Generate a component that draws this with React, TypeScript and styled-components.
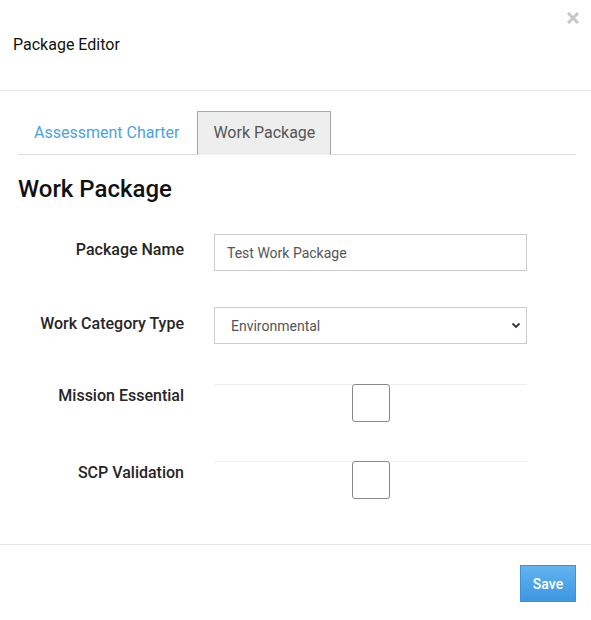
import styled, { createGlobalStyle } from 'styled-components';

const GlobalStyle = createGlobalStyle`
  html, body {
    margin: 0;
    padding: 0;
    background: #FFFFFF;
    font-family: Roboto, "Liberation Sans", Arial, sans-serif;
  }
`

const Modal = styled.div`
  width: 591px;
  height: 620px;
  background: #FFFFFF;
  position: relative;
  display: flex;
  flex-direction: column;
`

const ModalHeader = styled.div`
  height: 91px;
  border-bottom: 1px solid #e5e5e5;
  display: flex;
  align-items: center;
  padding: 0 13px;
  box-sizing: border-box;
`

const Title = styled.h4`
  margin: 0;
  font-size: 16px;
  font-weight: 400;
  color: #111;
  padding-bottom: 2px;
`

const CloseButton = styled.button`
  position: absolute;
  top: 9px;
  right: 9px;
  width: 18px;
  height: 18px;
  padding: 0;
  border: none;
  background: none;
  display: flex;
  align-items: center;
  justify-content: center;
  cursor: pointer;
`

const ModalBody = styled.div`
  padding: 20px 15px 0 18px;
  flex: 1;
`

const TabBar = styled.ul`
  display: flex;
  list-style: none;
  margin: 0;
  padding: 0;
  border-bottom: 1px solid #ddd;
`

const Tab = styled.li<{ $active?: boolean }>`
  height: 44px;
  box-sizing: border-box;
  display: flex;
  align-items: center;
  padding: 0 15px 2px;
  margin: ${({ $active }) => ($active ? '0 0 -1px 0' : '0 2px -1px 0')};
  font-size: 16px;
  color: ${({ $active }) => ($active ? '#555' : '#4aa3df')};
  background: ${({ $active }) => ($active ? '#eeeeee' : 'transparent')};
  border: 1px solid ${({ $active }) => ($active ? '#a9a9a9' : 'transparent')};
  border-bottom-color: ${({ $active }) => ($active ? '#eeeeee' : 'transparent')};
  cursor: pointer;
`

const SectionTitle = styled.h3`
  margin: 21px 0 32px;
  font-size: 24px;
  font-weight: 500;
  color: #111;
  line-height: 26px;
`

const FormRow = styled.div<{ $space: number }>`
  display: grid;
  grid-template-columns: 166px 313px;
  column-gap: 30px;
  margin-bottom: ${({ $space }) => $space}px;
`

const Label = styled.label<{ $top: number }>`
  text-align: right;
  font-size: 16px;
  font-weight: 500;
  color: #262626;
  padding-top: ${({ $top }) => $top}px;
  line-height: 18px;
`

const TextInput = styled.input`
  height: 37px;
  box-sizing: border-box;
  border: 1px solid #ccc;
  padding: 0 12px;
  font-family: inherit;
  font-size: 14px;
  color: #555;
  outline: none;
`

const SelectWrap = styled.div`
  position: relative;
  height: 37px;
`

const Select = styled.select`
  width: 100%;
  height: 37px;
  box-sizing: border-box;
  border: 1px solid #ccc;
  background: #fff;
  padding: 0 12px 0 16px;
  font-family: inherit;
  font-size: 14px;
  color: #555;
  appearance: none;
  outline: none;
`

const Chevron = styled.svg`
  position: absolute;
  right: 6px;
  top: 15px;
  pointer-events: none;
`

const CheckCell = styled.div`
  border-top: 1px solid #eee;
  display: flex;
  justify-content: center;
`

const CheckBox = styled.input`
  appearance: none;
  margin: -1px 0 0;
  width: 38px;
  height: 38px;
  box-sizing: border-box;
  border: 1px solid #888;
  border-radius: 3px;
  background: #fff;
  cursor: pointer;
`

const ModalFooter = styled.div`
  border-top: 1px solid #e5e5e5;
  height: 76px;
  box-sizing: border-box;
  padding: 20px 15px 0;
  display: flex;
  justify-content: flex-end;
  align-items: flex-start;
`

const SaveButton = styled.button`
  width: 56px;
  height: 37px;
  border: 1px solid #3a92d8;
  background: linear-gradient(#62b3ef, #3d97e2);
  color: #fff;
  font-family: inherit;
  font-size: 14px;
  font-weight: 500;
  cursor: pointer;
`

export default function App() {
  return (
    <>
      <GlobalStyle />
      <Modal>
        <CloseButton aria-label="Close">
          <svg width="12" height="12" viewBox="0 0 12 12">
            <path d="M2 2 L10 10 M10 2 L2 10" stroke="#c8c8c8" strokeWidth="3" strokeLinecap="square" />
          </svg>
        </CloseButton>
        <ModalHeader>
          <Title>Package Editor</Title>
        </ModalHeader>

        <ModalBody>
          <TabBar>
            <Tab>Assessment Charter</Tab>
            <Tab $active>Work Package</Tab>
          </TabBar>

          <SectionTitle>Work Package</SectionTitle>

          <FormRow $space={36}>
            <Label $top={7}>Package Name</Label>
            <TextInput defaultValue="Test Work Package" />
          </FormRow>

          <FormRow $space={40}>
            <Label $top={8}>Work Category Type</Label>
            <SelectWrap>
              <Select defaultValue="Environmental">
                <option>Environmental</option>
                <option>Structural</option>
                <option>Electrical</option>
              </Select>
              <Chevron width="10" height="7" viewBox="0 0 10 7">
                <path d="M1.5 1.5 L5 5 L8.5 1.5" fill="none" stroke="#333" strokeWidth="1.8" />
              </Chevron>
            </SelectWrap>
          </FormRow>

          <FormRow $space={39}>
            <Label $top={3}>Mission Essential</Label>
            <CheckCell>
              <CheckBox type="checkbox" />
            </CheckCell>
          </FormRow>

          <FormRow $space={0}>
            <Label $top={3}>SCP Validation</Label>
            <CheckCell>
              <CheckBox type="checkbox" />
            </CheckCell>
          </FormRow>
        </ModalBody>

        <ModalFooter>
          <SaveButton>Save</SaveButton>
        </ModalFooter>
      </Modal>
    </>
  )
}
